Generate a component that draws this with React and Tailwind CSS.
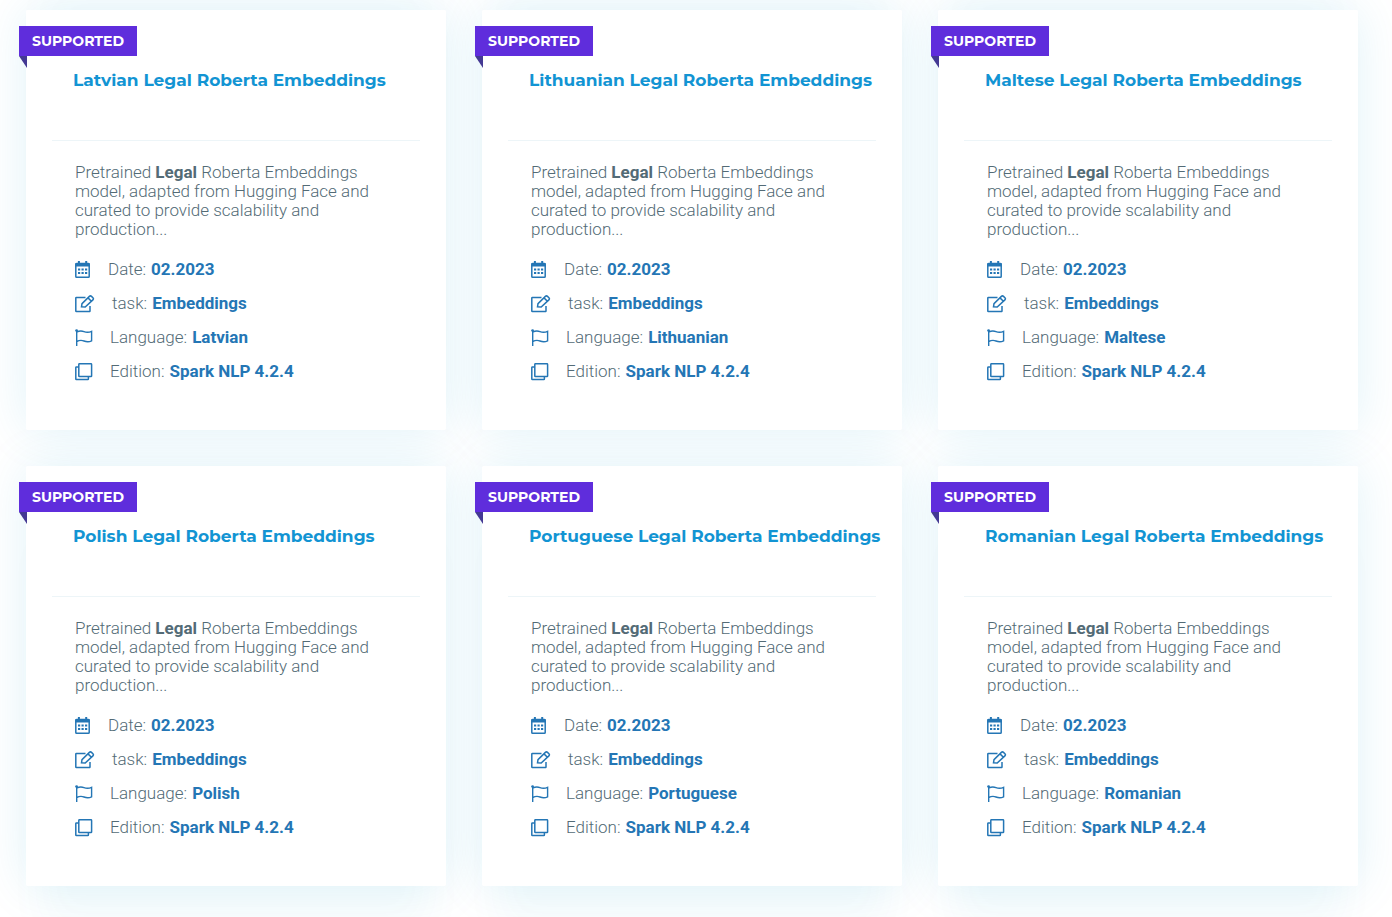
const models = ['Latvian', 'Lithuanian', 'Maltese', 'Polish', 'Portuguese', 'Romanian']

function CalendarIcon() {
  return (
    <svg width="16" height="18" viewBox="0 0 16 18" fill="none" aria-hidden="true">
      <rect x="0.8" y="2.6" width="13.4" height="13.6" rx="0.8" stroke="currentColor" strokeWidth="1.5" />
      <path d="M.3 2.2h14.5v3.4H.3zM2.9 0h2v3h-2zM10.2 0h2v3h-2z" fill="currentColor" />
      <path
        d="M3 7.6h2.2v2H3zM6.5 7.6h2.2v2H6.5zM10 7.6h2.2v2H10zM3 11h2.2v2H3zM6.5 11h2.2v2H6.5zM10 11h2.2v2H10z"
        fill="currentColor"
      />
    </svg>
  )
}

function EditIcon() {
  return (
    <svg width="20" height="18" viewBox="0 0 20 18" fill="none" stroke="currentColor" strokeWidth="1.5" aria-hidden="true">
      <path d="M10.5 2.4H1.4a.6.6 0 0 0-.6.6v13a.6.6 0 0 0 .6.6h13a.6.6 0 0 0 .6-.6v-5" />
      <path d="M6.5 11.9l.5-3.3 7.4-7.2a1.5 1.5 0 0 1 2.1 0l1.4 1.4a1.5 1.5 0 0 1 0 2.1l-7.7 7.2zM13 2.9l3.4 3.4" />
    </svg>
  )
}

function FlagIcon() {
  return (
    <svg width="18" height="18" viewBox="0 0 18 18" fill="none" stroke="currentColor" strokeWidth="1.4" aria-hidden="true">
      <path d="M1.7 1.5V17M1.7 3.1C4.3 1.7 6.4 1.6 9 2.6s4.8 1 7.6-.3v9.5c-2.8 1.4-5 1.2-7.6.2s-4.7-.9-7.3.7" />
      <circle cx="1.6" cy="1.6" r="1.4" fill="currentColor" stroke="none" />
    </svg>
  )
}

function CopyIcon() {
  return (
    <svg width="18" height="18" viewBox="0 0 18 18" fill="none" stroke="currentColor" strokeWidth="1.5" aria-hidden="true">
      <rect x="3.8" y="0.8" width="12.8" height="12.8" rx="0.6" />
      <path d="M3.8 4H1.4a.6.6 0 0 0-.6.6V16a.6.6 0 0 0 .6.6h11.4a.6.6 0 0 0 .6-.6v-2.4" />
    </svg>
  )
}

function Detail({ icon, label, value }) {
  return (
    <li className="flex h-[34px] items-center text-[#2476b5]">
      {icon}
      <span className="ml-[17px] font-light text-[#536b76]">{label}:</span>
      <strong className="ml-[5px] font-bold">{value}</strong>
    </li>
  )
}

// the outer rows get a second shadow so the glow carries on past the list
function ModelCard({ language, firstRow }) {
  const glow = firstRow
    ? 'shadow-[0_0_50px_rgba(0,155,205,0.12),0_-40px_40px_-16px_rgba(0,155,205,0.02)]'
    : 'shadow-[0_0_50px_rgba(0,155,205,0.12),0_60px_40px_-16px_rgba(0,155,205,0.03)]'

  return (
    <li className={`rounded-xs ${glow}`}>
      <article className="relative z-10 rounded-xs bg-white px-[26px] pt-[58px] pb-[41px]">
        <div className="absolute top-4 -left-[7px]">
          <div className="flex h-[30px] w-[118px] items-center justify-center bg-[#5f2ddc] font-['Montserrat','Inter',sans-serif] text-sm font-bold text-white">
            SUPPORTED
          </div>
          <svg className="block" width="8" height="12" viewBox="0 0 8 12" aria-hidden="true">
            <path d="M0 0h8v12z" fill="#443993" />
          </svg>
        </div>

        <h3 className="h-[73px] border-b border-[#edf5f8] pl-[21px] font-['Montserrat','Inter',sans-serif] text-[17px] leading-6 font-bold whitespace-nowrap text-[#1294d3]">
          <a href="#">{language} Legal Roberta Embeddings</a>
        </h3>

        <div className="px-[23px] pt-[22px] text-[17px]">
          <p className="leading-[19px] font-light text-[#536b76]">
            Pretrained <strong className="font-bold">Legal</strong> Roberta Embeddings model, adapted from Hugging
            Face and curated to provide scalability and production...
          </p>
          <ul className="mt-3.5">
            <Detail icon={<CalendarIcon />} label="Date" value="02.2023" />
            <Detail icon={<EditIcon />} label="task" value="Embeddings" />
            <Detail icon={<FlagIcon />} label="Language" value={language} />
            <Detail icon={<CopyIcon />} label="Edition" value="Spark NLP 4.2.4" />
          </ul>
        </div>
      </article>
    </li>
  )
}

export default function App() {
  return (
    <main className="overflow-hidden bg-white pt-[10px] pr-[34px] pb-[31px] pl-[26px] font-['Roboto',sans-serif]">
      <ul className="grid grid-cols-3 gap-9">
        {models.map((language, i) => (
          <ModelCard key={language} language={language} firstRow={i < 3} />
        ))}
      </ul>
    </main>
  )
}
